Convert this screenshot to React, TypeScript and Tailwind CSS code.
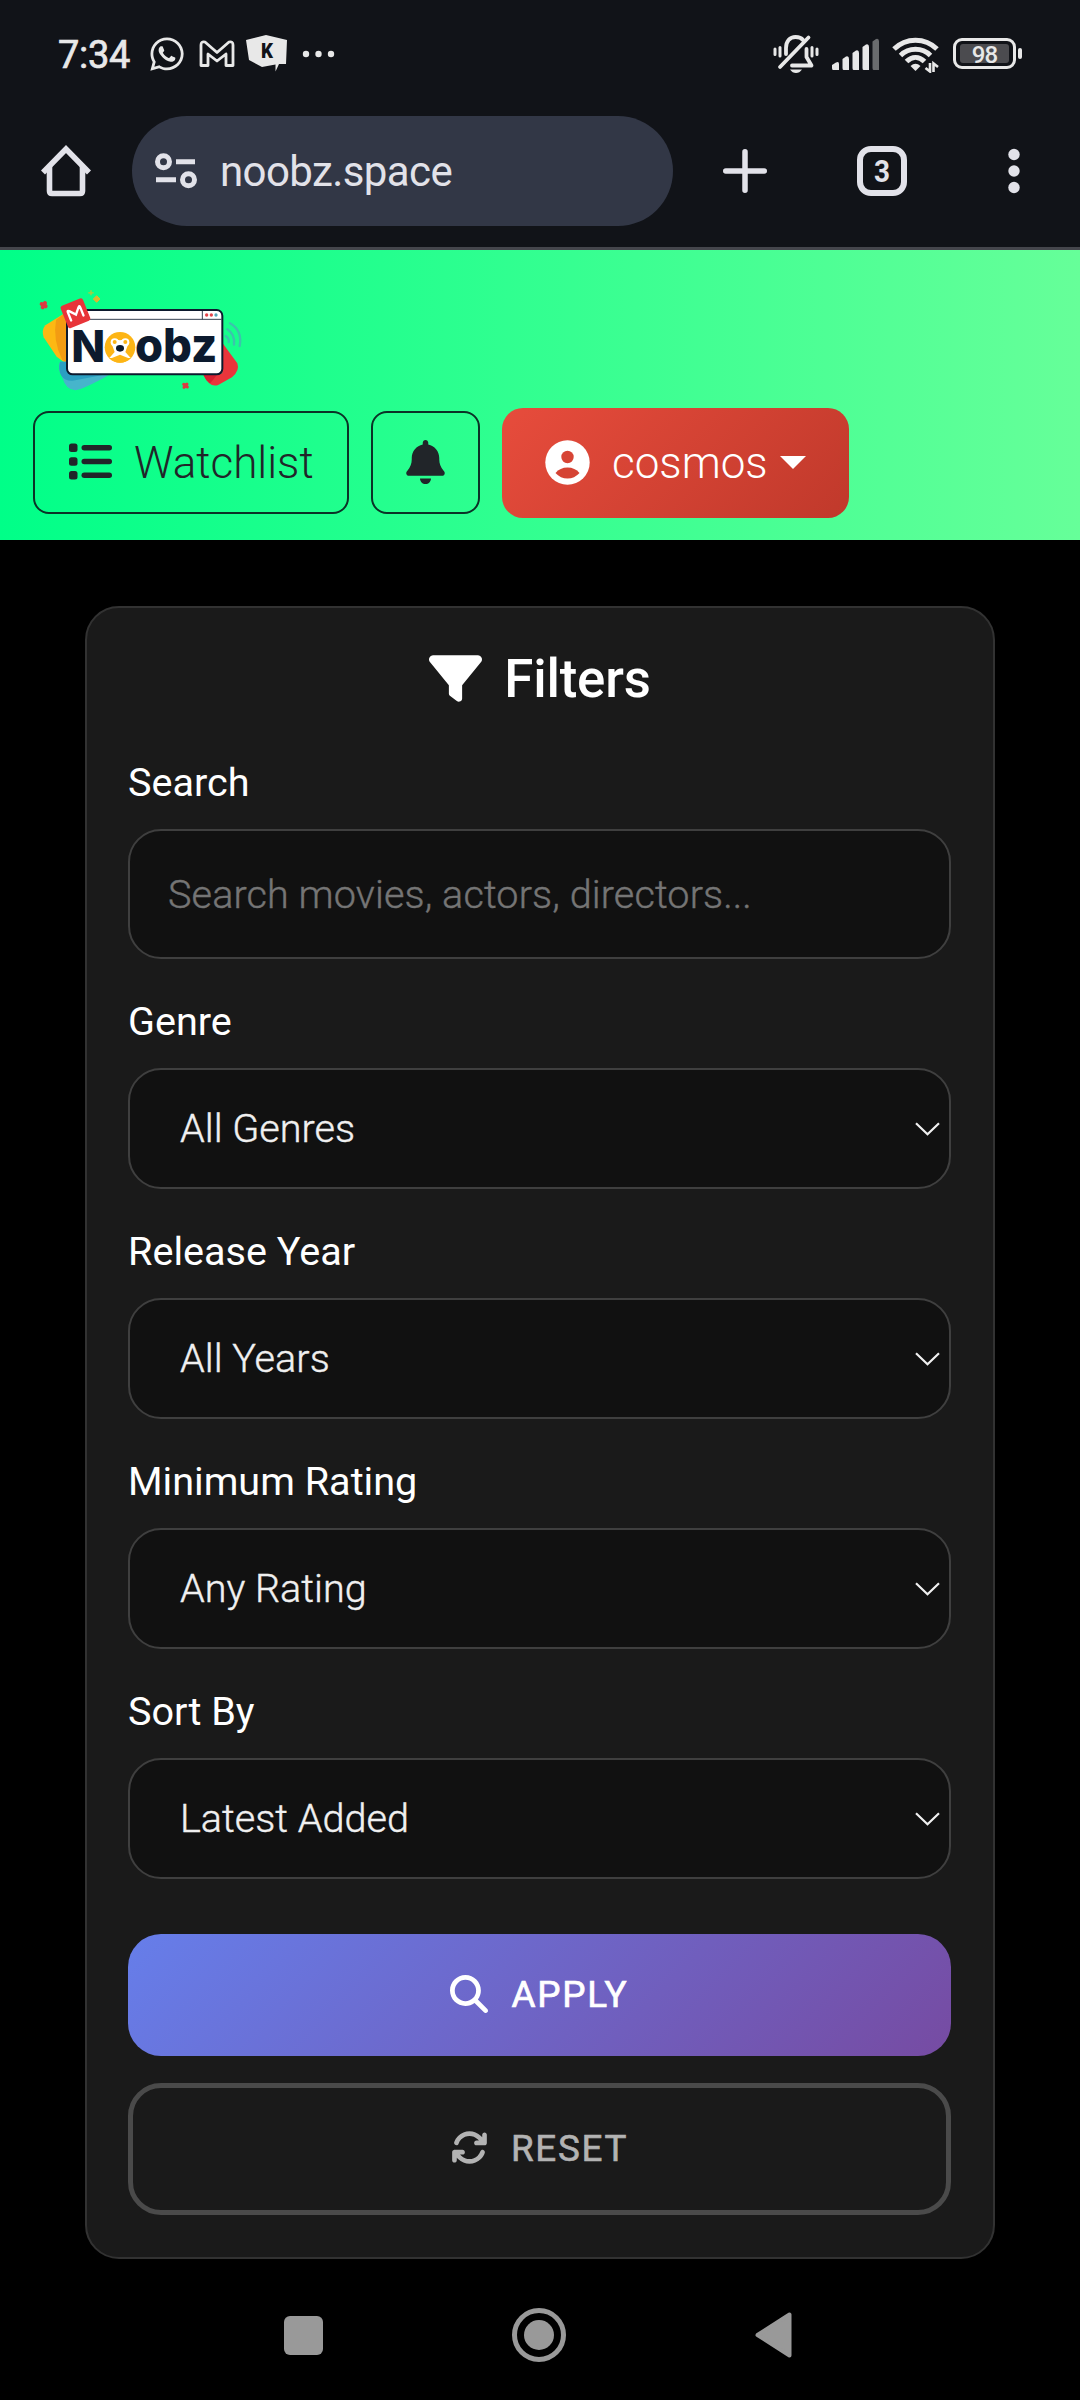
import React from "react";
import { FaArrowsRotate, FaBell, FaFilter, FaMagnifyingGlass } from "react-icons/fa6";
import { FaWhatsapp } from "react-icons/fa";

function StatusBar() {
  return (
    <div className="flex h-[107px] items-center pl-[58px] pr-[58px] text-[#e8e8e8]">
      <span className="w-[74px] pt-[2px] text-[38px] leading-[44px] tracking-[-0.3px] [-webkit-text-stroke:0.7px]">7:34</span>
      <FaWhatsapp className="ml-[16px] size-[38px] shrink-0" />
      <svg className="ml-[13px] shrink-0" width="36" height="28" viewBox="0 0 36 28" fill="none" stroke="currentColor" strokeWidth="2.8" strokeLinejoin="round">
        <path d="M2 25.5V5Q2 1 6 2L18 12.5L30 2Q34 1 34 5V25.5H27V14L18 21L9 14V25.5Z" />
      </svg>
      <svg className="ml-[11px] shrink-0" width="42" height="37" viewBox="0 0 42 37">
        <path d="M0 5L20 0L41 5L40 29H33L29.500 36.500V29.500L16 32L3 25Z" fill="currentColor" />
        <text x="15" y="23" fontFamily="Roboto, sans-serif" fontWeight="900" fontSize="20" textLength="12" lengthAdjust="spacingAndGlyphs" fill="#111318">K</text>
      </svg>
      <svg className="ml-[14px] shrink-0" width="34" height="8" viewBox="0 0 34 8" fill="currentColor">
        <circle cx="4" cy="4" r="3.200" />
        <circle cx="16.500" cy="4" r="3.200" />
        <circle cx="29" cy="4" r="3.200" />
      </svg>

      <svg className="ml-auto shrink-0" width="46" height="40" viewBox="0 0 46 40" fill="none" stroke="currentColor" strokeWidth="3.800" strokeLinecap="round">
        <path d="M13 20V14C13 7 17 3 22.500 3C26 3 28.500 4 30 6" />
        <path d="M33.500 15V23L38.500 31.500H19" strokeLinejoin="round" />
        <path d="M35.500 3.500L7 33" />
        <path d="M2 15V20.500M7 13.500V22M39 13.500V22M44 15V20.500" strokeWidth="3" />
        <path d="M17 35.500H29Q26.500 39 23 39T17 35.500Z" fill="currentColor" stroke="none" />
      </svg>
      <svg className="ml-[12px] shrink-0" width="49" height="34" viewBox="0 0 49 34" fill="currentColor">
        <path d="M1 28L5 25.500Q8 24 8 27V33H2Q1 33 1 31Z" />
        <path d="M11.500 22L15 19.500Q18 18.500 18 22V33H12.500Q11.500 33 11.500 31Z" />
        <path d="M21.500 16L25 13.500Q28 12.500 28 16V33H22.500Q21.500 33 21.500 31Z" />
        <path d="M31.500 10L35 7.500Q38 6.500 38 10V33H32.500Q31.500 33 31.500 31Z" />
        <path d="M41.500 4.500L45 2Q48 1 48 4.500V33H42.500Q41.500 33 41.500 31Z" opacity="0.420" />
      </svg>
      <svg className="ml-[12px] shrink-0" width="47" height="38" viewBox="0 0 47 38" fill="none" stroke="currentColor" strokeWidth="5">
        <path d="M2 14C14 2.200 33 2.200 45 14" />
        <path d="M8.500 20.500C17 12.300 30 12.300 38.500 20.500" />
        <path d="M14.500 26.500C20 21 27 21 32.500 26.500" />
        <path d="M18.500 31Q23.500 26.500 28.500 31L23.500 36Z" fill="currentColor" stroke="none" />
        <path d="M38 28V36.500L33.500 33M41.500 37V28.500L46 32" strokeWidth="2.600" />
      </svg>
      <div className="ml-[14px] flex shrink-0 items-center">
        <div className="flex h-[31px] w-[63px] items-center justify-center rounded-[9px] border-3 border-[#e8e8e8]">
          <div className="flex h-[19px] w-[49px] items-center justify-center rounded-[3px] bg-[#4b4b4f] pt-[2px] text-[24px] leading-none font-medium tracking-[-1px]">98</div>
        </div>
        <div className="ml-[2px] h-[11px] w-[4px] rounded-full bg-[#e8e8e8]" />
      </div>
    </div>
  );
}

function BrowserBar() {
  return (
    <div className="flex h-[143px] items-start border-b-3 border-[#45464c] pt-[9px] text-[#e2e2e9]">
      <div className="flex h-[110px] w-full items-center pl-[41px]">
        <svg className="shrink-0" width="50" height="52" viewBox="0 0 50 52" fill="none" stroke="currentColor" strokeWidth="5.600" strokeLinejoin="round">
          <path d="M2 27.500L25 4L48 27.500" strokeLinejoin="miter" />
          <path d="M8.500 21V46Q8.500 48.500 11 48.500H39Q41.500 48.500 41.500 46V21" />
        </svg>
        <div className="ml-[41px] flex h-[110px] w-[541px] items-center rounded-full bg-[#323746]">
          <svg className="ml-[23px] shrink-0" width="42" height="36" viewBox="0 0 42 36" fill="none" stroke="currentColor" strokeWidth="5">
            <circle cx="8.500" cy="8.800" r="6" />
            <path d="M21 8.800H40M1 26.800H21" />
            <circle cx="33.500" cy="26.800" r="6" />
          </svg>
          <span className="ml-[23px] pt-px text-[42px] leading-[50px] tracking-[-0.6px]">noobz.space</span>
        </div>
        <svg className="ml-[50px] shrink-0" width="44" height="44" viewBox="0 0 44 44" stroke="currentColor" strokeWidth="5.500" strokeLinecap="round">
          <path d="M22 2.750V41.250M2.750 22H41.250" />
        </svg>
        <div className="ml-[90px] flex size-[50px] shrink-0 items-center justify-center rounded-[14px] border-6 border-[#e2e2e9] text-[31px] leading-none font-bold">
          <span className="inline-block scale-x-90">3</span>
        </div>
        <svg className="ml-[101px] shrink-0" width="12" height="46" viewBox="0 0 12 46" fill="currentColor">
          <circle cx="6" cy="6.500" r="5.700" />
          <circle cx="6" cy="23" r="5.700" />
          <circle cx="6" cy="39.500" r="5.700" />
        </svg>
      </div>
    </div>
  );
}

function Logo() {
  return (
    <svg className="block" width="220" height="120" viewBox="0 0 660 360">
      <path d="M100 102L46 136Q34 150 41 172L80 230L110 252V105Z" fill="#fdb813" />
      <path d="M100 103L78 120Q68 180 96 238L112 250V105Z" fill="#f39c12" />
      <path d="M90 245Q82 265 96 290Q108 330 136 331Q160 328 236 286L112 245Z" fill="#46b5cb" />
      <path d="M90 245Q84 270 94 287Q104 303 128 302L222 284L112 245Z" fill="#2b9fc2" />
      <path d="M578 190L622 250Q630 272 606 292L566 314Q540 326 520 284L578 280Z" fill="#e9353b" />
      <path d="M578 256Q560 290 540 310Q526 300 520 284L578 280Z" fill="#d81f30" />
      <g fill="none" stroke="#3cc4ad" strokeWidth="7" strokeLinecap="round">
        <path d="M587 168Q598 176 596 186" />
        <path d="M592 148Q616 164 612 194" />
        <path d="M600 130Q638 152 629 198" />
      </g>
      <rect x="111" y="90" width="466" height="193" rx="17" fill="#fff" stroke="#0c1a2e" strokeWidth="6" />
      <path d="M114 118H574M517 92V118" stroke="#0c1a2e" strokeWidth="2.500" />
      <circle cx="530" cy="105" r="5" fill="#e4444a" />
      <circle cx="544" cy="105" r="5" fill="#e4444a" />
      <circle cx="558" cy="105" r="5" fill="#56a6b9" />
      <g transform="rotate(-22 136 99)">
        <rect x="100" y="64" width="72" height="72" rx="7" fill="#e83439" />
        <path d="M116 115V88Q116 82 121 87L136 104L151 87Q156 82 156 88V115" fill="none" stroke="#fff" strokeWidth="7" strokeLinecap="round" />
      </g>
      <g fontFamily="Inter, sans-serif" fontWeight="800" fill="#0c1a2e">
        <text x="124" y="245" fontSize="133" textLength="102" lengthAdjust="spacingAndGlyphs">N</text>
        <text x="315" y="245" fontSize="140" textLength="247" lengthAdjust="spacingAndGlyphs">obz</text>
      </g>
      <circle cx="270" cy="202" r="46" fill="#fdb515" />
      <circle cx="254" cy="187" r="12" fill="#fff" />
      <circle cx="286" cy="187" r="12" fill="#fff" />
      <path d="M254 178Q270 183 286 178L294 194L286 216L302 234H238L254 216L246 194Z" fill="#fff" />
      <circle cx="254" cy="186" r="6" fill="#fdb515" />
      <circle cx="286" cy="186" r="6" fill="#fdb515" />
      <ellipse cx="270" cy="205" rx="12" ry="10" fill="#0c1a2e" />
      <path d="M240 236L270 224L300 236Q287 248 270 248T240 236Z" fill="#fdb515" />
      <g stroke="#dc3b42" strokeWidth="12" strokeLinecap="round">
        <path d="M35 72L47 79M45 69L38 82" />
        <path d="M461 313L472 321M471 312L462 322" strokeWidth="9" />
      </g>
      <path d="M200 47L210 57L200 67L190 57Z" fill="#e0b82d" stroke="#e0b82d" strokeWidth="3" strokeLinejoin="round" />
      <path d="M183 31V46M175 38.500H191" stroke="#b5c93a" strokeWidth="4" />
    </svg>
  );
}

function SiteHeader() {
  return (
    <header className="h-[290px] bg-linear-[90deg,#00ff88,#66ff99] pt-[30px] font-light text-[#212529]">
      <div className="ml-[30px]">
        <Logo />
      </div>
      <div className="mt-[8px] ml-[33px] flex items-start gap-[22px] text-[44px] leading-[66px]">
        <button className="mt-[3px] flex h-[103px] w-[316px] items-center rounded-[16px] border-2 border-[#0b3327] pl-[34px]">
          <svg className="-mt-[2px] shrink-0" width="44" height="37" viewBox="0 0 44 37" fill="currentColor">
            <rect x="0" y="0.500" width="8.500" height="8.500" rx="2.500" />
            <rect x="0" y="14.300" width="8.500" height="8.500" rx="2.500" />
            <rect x="0" y="28" width="8.500" height="8.500" rx="2.500" />
            <rect x="12.500" y="2" width="30.500" height="5.500" rx="2.750" />
            <rect x="12.500" y="15.800" width="30.500" height="5.500" rx="2.750" />
            <rect x="12.500" y="29.500" width="30.500" height="5.500" rx="2.750" />
          </svg>
          <span className="ml-[21px]">Watchlist</span>
        </button>
        <button className="mt-[3px] flex h-[103px] w-[109px] items-center justify-center rounded-[16px] border-2 border-[#0b3327]">
          <FaBell className="-mt-[2px] h-[44px] w-[39px]" />
        </button>
        <button className="flex h-[110px] w-[347px] items-center rounded-[21px] bg-linear-[135deg,#e74c3c,#c0392b] pl-[43px] text-white">
          <svg className="-mt-[2px] shrink-0" width="45" height="45" viewBox="0 0 45 45">
            <circle cx="22.500" cy="22.500" r="22.200" fill="#fff" />
            <circle cx="22.500" cy="17" r="6.200" fill="#d74435" />
            <path d="M10.500 33Q15 27.500 22.500 27.500T34.500 33Q29.500 38.500 22.500 38.500T10.500 33Z" fill="#d54334" />
          </svg>
          <span className="ml-[22px]">cosmos</span>
          <svg className="-mt-[1px] ml-[12px] shrink-0" width="26" height="13" viewBox="0 0 26 13">
            <path d="M0 0H26L13 13Z" fill="#fff" />
          </svg>
        </button>
      </div>
    </header>
  );
}

function SelectField({ label, value }: { label: string; value: string }) {
  return (
    <div className="mt-[41px] h-[189px]">
      <label className="block h-[68px] text-[39.6px] leading-[44px] text-white">{label}</label>
      <div className="flex h-[121px] items-center justify-between rounded-[33px] border-2 border-[#3f3f3f] bg-[#111] pr-[9px] pl-[50px]">
        <span className="text-[39.6px] leading-[48px] font-light text-[#f0f0f0] [-webkit-text-stroke:0.4px]">{value}</span>
        <svg width="25" height="14" viewBox="0 0 25 14" fill="none" stroke="#f0f0f0" strokeWidth="2.200">
          <path d="M1 1.200L12.500 12.300L24 1.200" />
        </svg>
      </div>
    </div>
  );
}

function FilterCard() {
  return (
    <section className="ml-[85px] h-[1653px] w-[910px] rounded-[34px] border-2 border-[#323232] bg-[#1a1a1a] pr-[42px] pl-[41px]">
      <h2 className="mt-[38px] flex h-[66px] items-center justify-center pl-px text-[52.8px] leading-[66px] font-medium text-white">
        <FaFilter className="-mt-[2px] size-[53px]" />
        <span className="ml-[22px] tracking-[-0.2px]">Filters</span>
      </h2>
      <div className="mt-[49px] h-[198px]">
        <label className="block h-[68px] text-[39.6px] leading-[44px] text-white">Search</label>
        <div className="flex h-[130px] items-center rounded-[33px] border-2 border-[#3f3f3f] bg-[#111] pt-[2px] pl-[38px] text-[39.6px] font-light tracking-[0.1px] text-[#757575] [-webkit-text-stroke:0.4px]">
          Search movies, actors, directors...
        </div>
      </div>
      <SelectField label="Genre" value="All Genres" />
      <SelectField label="Release Year" value="All Years" />
      <SelectField label="Minimum Rating" value="Any Rating" />
      <SelectField label="Sort By" value="Latest Added" />
      <button className="mt-[55px] flex h-[122px] w-full items-center justify-center rounded-[33px] bg-linear-[135deg,#667eea,#764ba2] text-[36.8px] tracking-[1.8px] text-white [-webkit-text-stroke:0.7px]">
        <FaMagnifyingGlass className="-mt-[2px] size-[38px]" />
        <span className="ml-[23px]">APPLY</span>
      </button>
      <button className="mt-[27px] flex h-[132px] w-full items-center justify-center rounded-[33px] border-5 border-[#4a4a4a] text-[36.8px] tracking-[1.7px] text-[#b3b3b3] [-webkit-text-stroke:0.6px]">
        <FaArrowsRotate className="-mt-[3px] size-[37px]" />
        <span className="ml-[23px]">RESET</span>
      </button>
    </section>
  );
}

function NavBar() {
  return (
    <nav className="mt-[49px] flex h-[54px] items-center pl-[284px]">
      <div className="size-[39px] rounded-[6px] bg-[#999]" />
      <div className="ml-[189px] flex size-[54px] items-center justify-center rounded-full border-5 border-[#999]">
        <div className="size-[30px] rounded-full bg-[#999]" />
      </div>
      <svg className="ml-[189px]" width="37" height="46" viewBox="0 0 37 46">
        <path d="M2.500 23L34.500 2.500V43.500Z" fill="#999" stroke="#999" strokeWidth="4" strokeLinejoin="round" />
      </svg>
    </nav>
  );
}

export default function App() {
  return (
    <div className="h-[2400px] w-[1080px] overflow-hidden bg-black font-['Roboto',sans-serif]">
      <div className="bg-[#111318]">
        <StatusBar />
        <BrowserBar />
      </div>
      <SiteHeader />
      <main className="pt-[66px]">
        <FilterCard />
      </main>
      <NavBar />
    </div>
  );
}
